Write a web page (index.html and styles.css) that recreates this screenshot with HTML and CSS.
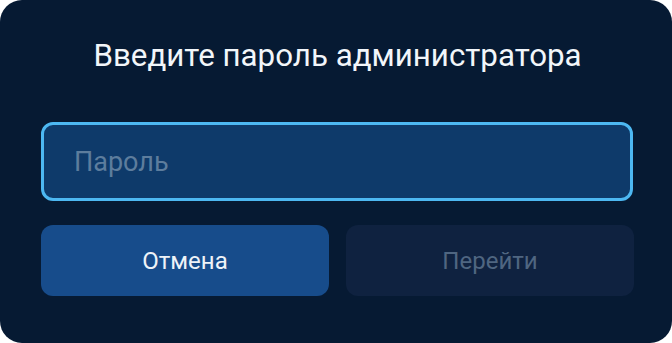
FILE: index.html
```html
<!DOCTYPE html>
<html lang="ru">
  <head>
    <meta charset="UTF-8" />
    <meta name="viewport" content="width=device-width, initial-scale=1.0" />
    <title>Пароль администратора</title>
    <link rel="stylesheet" href="styles.css">
  </head>
  <body>
    <div class="dialog">
      <div class="title">Введите пароль администратора</div>
      <input class="password" type="password" placeholder="Пароль" />
      <div class="actions">
        <button class="btn cancel">Отмена</button>
        <button class="btn go" disabled>Перейти</button>
      </div>
    </div>
  </body>
</html>
```

FILE: styles.css
```css
body {
  margin: 0;
  background: #ffffff;
  font-family: Roboto, "Noto Sans", sans-serif;
}

.dialog {
  box-sizing: border-box;
  width: 672px;
  height: 343px;
  padding: 38px 38px 0 41px;
  border-radius: 22px;
  background-color: #061a33;
  display: flex;
  flex-direction: column;
}

.title {
  color: #f2f6fa;
  font-size: 31.3px;
  line-height: 36px;
  text-align: center;
}

.password {
  box-sizing: border-box;
  margin-top: 48px;
  width: 592px;
  height: 79px;
  padding: 0 30px;
  border: 3px solid #4db8f2;
  border-radius: 12px;
  background-color: #0e3a6a;
  color: #ffffff;
  font-family: inherit;
  font-size: 27px;
  outline: none;
}

.password::placeholder {
  color: #5d7d9d;
}

.actions {
  display: flex;
  gap: 17px;
  margin-top: 24px;
}

.btn {
  width: 288px;
  height: 71px;
  margin: 0;
  padding: 0;
  border: none;
  border-radius: 12px;
  font-family: inherit;
  font-size: 24px;
}

.cancel {
  background-color: #174c8b;
  color: #eef3f8;
}

.go {
  background-color: #0f2240;
  color: #4f6681;
}
```
